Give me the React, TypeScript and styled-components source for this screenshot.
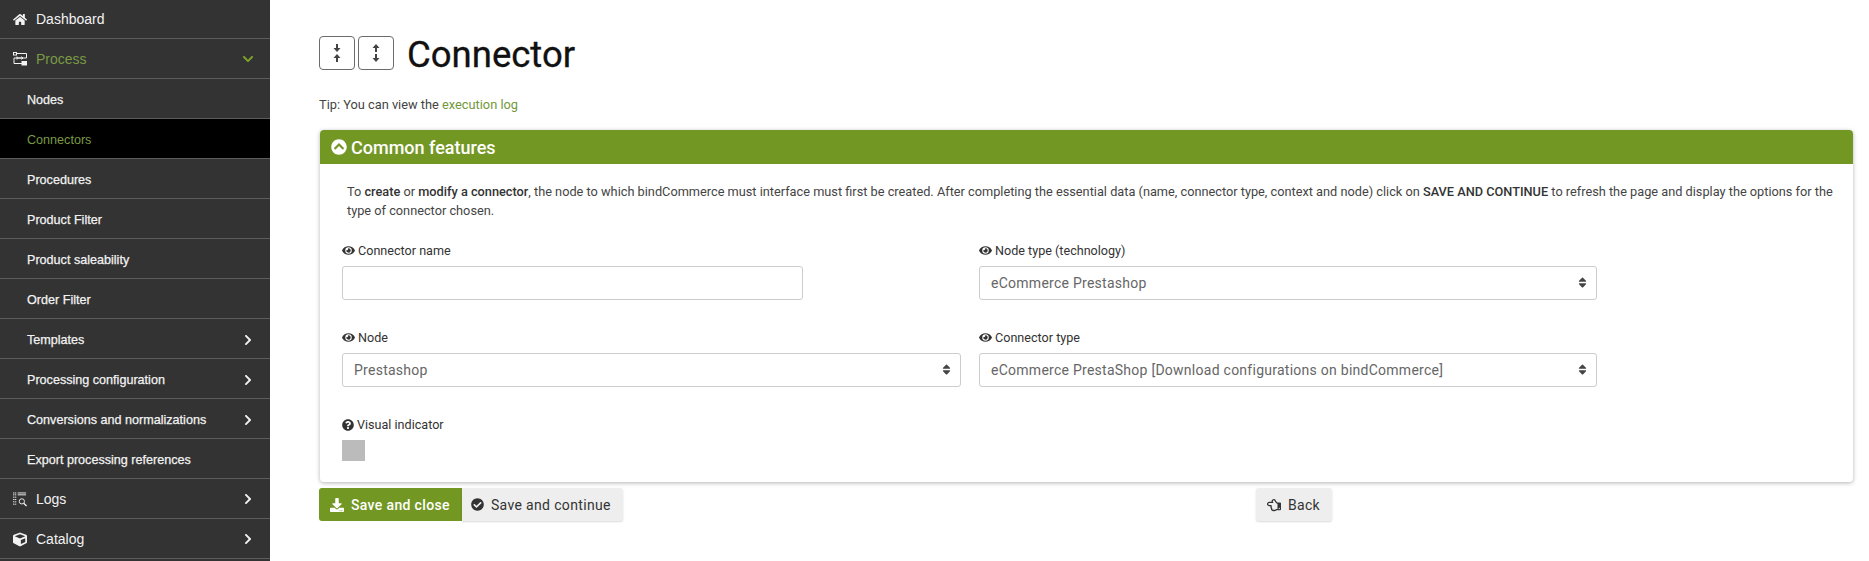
import { ReactNode } from "react";
import styled, { createGlobalStyle } from "styled-components";
import {
    FaHome, FaChevronDown, FaChevronRight, FaEye, FaQuestionCircle, FaChevronCircleUp,
    FaDownload, FaCheckCircle, FaRegHandPointLeft, FaCube, FaSort,
} from "react-icons/fa";

const GlobalStyle = createGlobalStyle`
html, body { margin: 0; padding: 0; height: 100%; overflow: hidden; background: #fff; }
* { box-sizing: border-box; }
`;

const green = "#739723";

const Page = styled.div`
display: flex;
height: 100vh;
font-family: Roboto, "Liberation Sans", sans-serif;
color: #333;
`;

const Sidebar = styled.nav`
width: 270px;
flex: none;
background: #333;
font-family: "Liberation Sans", Arial, sans-serif;
overflow: hidden;
`;

const MenuRow = styled.a<{ $sub?: boolean; $active?: boolean; $open?: boolean }>`
display: flex;
align-items: center;
height: 40px;
padding: ${(p) => (p.$sub ? "2px" : "1px")} 16px 0 ${(p) => (p.$sub ? "27px" : "13px")};
border-bottom: 1px solid #5c5c5c;
background: ${(p) => (p.$active ? "#000" : "transparent")};
color: ${(p) => (p.$active || p.$open ? "#7a9a45" : "#f2f2f2")};
font-size: ${(p) => (p.$sub ? "12.6px" : "14px")};
font-weight: normal;
-webkit-text-stroke: ${(p) => (p.$sub && !p.$active ? "0.25px" : "0")};
&:first-child { height: 39px; padding-top: 0; }
`;

const MenuIcon = styled.span`
display: flex;
justify-content: center;
width: 14px;
margin-right: 9px;
color: #f2f2f2;
font-size: 15px;
`;

const MenuLabel = styled.span`
flex: 1;
`;

const Chevron = styled.span<{ $open?: boolean }>`
display: flex;
color: ${(p) => (p.$open ? "#7fa32a" : "#f2f2f2")};
font-size: 12px;
`;

const Main = styled.main`
flex: 1;
min-width: 0;
padding: 36px 16px 0 49px;
`;

const TitleBar = styled.div`
display: flex;
align-items: center;
gap: 3px;
height: 34px;
`;

const ToggleButton = styled.button`
display: flex;
align-items: center;
justify-content: center;
width: 36px;
height: 34px;
padding: 0;
background: #fff;
border: 1px solid #6b6b6b;
border-radius: 4px;
color: #444;
`;

const Title = styled.h1`
margin: 3px 0 0 10px;
color: #111;
font-size: 36.5px;
font-weight: 400;
line-height: 34px;
-webkit-text-stroke: 0.3px #111;
`;

const Tip = styled.p`
margin: 25px 0 0;
color: #444;
font-size: 12.8px;
line-height: 19px;
`;

const TextLink = styled.a`
color: #73983a;
`;

const Card = styled.section`
margin: 16px 0 0 1px;
height: 352px;
background: #fff;
border-radius: 4px;
box-shadow: 0 1px 4px rgba(0, 0, 0, 0.3);
`;

const CardHeader = styled.header`
display: flex;
align-items: center;
gap: 4px;
height: 34px;
padding: 0 11px;
background: ${green};
border-radius: 4px 4px 0 0;
color: #fff;
font-size: 18px;
font-weight: 500;
`;

const CardBody = styled.div`
padding: 18px 18px 0 27px;
`;

const Intro = styled.p`
margin: 0;
color: #444;
font-size: 12.75px;
line-height: 19px;
strong { color: #333; font-weight: 500; }
`;

const FormGrid = styled.div`
display: grid;
grid-template-columns: 619px 618px;
column-gap: 18px;
row-gap: 28px;
margin: 21px 0 0 -5px;
`;

const Field = styled.div`
display: flex;
flex-direction: column;
gap: 6px;
`;

const Label = styled.label`
display: flex;
align-items: center;
gap: 3px;
color: #333;
font-size: 12.6px;
line-height: 19px;
`;

const TextInput = styled.input`
width: 461px;
height: 34px;
border: 1px solid #ccc;
border-radius: 3px;
background: #fff;
`;

const SelectWrap = styled.div`
position: relative;
`;

const Select = styled.select`
display: block;
width: 100%;
height: 34px;
padding: 0 11px;
appearance: none;
border: 1px solid #ccc;
border-radius: 3px;
background: #fff;
color: #666;
font-family: Roboto, sans-serif;
font-size: 14px;
letter-spacing: 0.26px;
`;

const SelectArrow = styled.span`
position: absolute;
top: 10px;
right: 8px;
display: flex;
color: #444;
font-size: 13px;
pointer-events: none;
`;

const Swatch = styled.div`
width: 23px;
height: 21px;
background: #bbb;
`;

const Actions = styled.div`
display: flex;
margin-top: 6px;
`;

const ActionButton = styled.button<{ $primary?: boolean; $pushed?: boolean }>`
display: flex;
align-items: center;
gap: 7px;
height: 33px;
margin-left: ${(p) => (p.$pushed ? "633px" : "0")};
padding: 0 12px 0 ${(p) => (p.$pushed ? "11px" : p.$primary ? "11px" : "9px")};
border: 0;
border-radius: ${(p) => (p.$primary ? "3px 0 0 3px" : p.$pushed ? "3px" : "0 3px 3px 0")};
background: ${(p) => (p.$primary ? green : "#eee")};
box-shadow: ${(p) => (p.$primary ? "none" : "0 1px 2px rgba(0, 0, 0, 0.15)")};
color: ${(p) => (p.$primary ? "#fff" : "#333")};
font-family: Roboto, sans-serif;
font-size: 14px;
font-weight: ${(p) => (p.$primary ? 500 : 400)};
letter-spacing: 0.35px;
`;

const ProcessIcon = () => (
    <svg width="14" height="14" viewBox="0 0 14 14" fill="none" stroke="currentColor" strokeWidth="1">
        <rect x="0.5" y="0.5" width="3" height="2.5" />
        <path d="M3.5 1.5H13.5V6H1V11.5H9" />
        <rect x="9" y="9.5" width="4.5" height="3.5" fill="currentColor" />
        <path d="M4 6H10M4 4.5V7.5M8.5 4.5L10 6L8.5 7.5" />
    </svg>
);

const LogsIcon = () => (
    <svg width="15" height="15" viewBox="0 0 15 15" fill="none" stroke="currentColor" strokeWidth="1">
        <path d="M5 0.5H14M5 2.5H14" />
        <path d="M0 0.5H3.5M0 2.5H3.5M0 5H3.5M0 7.5H3.5M0 10H3.5M0 12.5H3.5" strokeDasharray="1.5 0.5" />
        <circle cx="9.5" cy="9.5" r="2.8" />
        <path d="M11.5 11.5L14.5 14.5" strokeWidth="1.4" />
    </svg>
);

const CollapseIcon = () => (
    <svg width="10" height="18" viewBox="0 0 10 18" fill="currentColor">
        <path d="M5 8L1.5 4H4V0H6V4H8.5Z" />
        <path d="M5 10L8.5 14H6V18H4V14H1.5Z" />
    </svg>
);

const ExpandIcon = () => (
    <svg width="10" height="18" viewBox="0 0 10 18" fill="currentColor">
        <path d="M5 0L8.5 4H6V8H4V4H1.5Z" />
        <path d="M5 18L1.5 14H4V10H6V14H8.5Z" />
    </svg>
);

type MenuItem = {
    label: string;
    icon?: ReactNode;
    sub?: boolean;
    active?: boolean;
    open?: boolean;
    arrow?: boolean;
};

const menu: MenuItem[] = [
    { label: "Dashboard", icon: <FaHome /> },
    { label: "Process", icon: <ProcessIcon />, open: true },
    { label: "Nodes", sub: true },
    { label: "Connectors", sub: true, active: true },
    { label: "Procedures", sub: true },
    { label: "Product Filter", sub: true },
    { label: "Product saleability", sub: true },
    { label: "Order Filter", sub: true },
    { label: "Templates", sub: true, arrow: true },
    { label: "Processing configuration", sub: true, arrow: true },
    { label: "Conversions and normalizations", sub: true, arrow: true },
    { label: "Export processing references", sub: true },
    { label: "Logs", icon: <LogsIcon />, arrow: true },
    { label: "Catalog", icon: <FaCube />, arrow: true },
];

const SelectField = ({ label, value }: { label: string; value: string }) => (
    <Field>
        <Label><FaEye size={13} />{label}</Label>
        <SelectWrap>
            <Select defaultValue={value}>
                <option>{value}</option>
            </Select>
            <SelectArrow><FaSort /></SelectArrow>
        </SelectWrap>
    </Field>
);

const App = () => (
    <Page>
        <GlobalStyle />
        <Sidebar>
            {menu.map((item) => (
                <MenuRow key={item.label} $sub={item.sub} $active={item.active} $open={item.open}>
                    {item.icon && <MenuIcon>{item.icon}</MenuIcon>}
                    <MenuLabel>{item.label}</MenuLabel>
                    {item.open && <Chevron $open><FaChevronDown /></Chevron>}
                    {item.arrow && <Chevron><FaChevronRight /></Chevron>}
                </MenuRow>
            ))}
        </Sidebar>
        <Main>
            <TitleBar>
                <ToggleButton><CollapseIcon /></ToggleButton>
                <ToggleButton><ExpandIcon /></ToggleButton>
                <Title>Connector</Title>
            </TitleBar>
            <Tip>Tip: You can view the <TextLink>execution log</TextLink></Tip>
            <Card>
                <CardHeader><FaChevronCircleUp size={16} />Common features</CardHeader>
                <CardBody>
                    <Intro>
                        To <strong>create</strong> or <strong>modify a connector</strong>, the node to which bindCommerce must interface must first be created. After completing the essential data (name, connector type, context and node) click on <strong>SAVE AND CONTINUE</strong> to refresh the page and display the options for the type of connector chosen.
                    </Intro>
                    <FormGrid>
                        <Field>
                            <Label><FaEye size={13} />Connector name</Label>
                            <TextInput />
                        </Field>
                        <SelectField label="Node type (technology)" value="eCommerce Prestashop" />
                        <SelectField label="Node" value="Prestashop" />
                        <SelectField label="Connector type" value="eCommerce PrestaShop [Download configurations on bindCommerce]" />
                        <Field>
                            <Label><FaQuestionCircle size={12} />Visual indicator</Label>
                            <Swatch />
                        </Field>
                    </FormGrid>
                </CardBody>
            </Card>
            <Actions>
                <ActionButton $primary><FaDownload size={14} />Save and close</ActionButton>
                <ActionButton><FaCheckCircle size={13} />Save and continue</ActionButton>
                <ActionButton $pushed><FaRegHandPointLeft size={14} />Back</ActionButton>
            </Actions>
        </Main>
    </Page>
);

export default App;
